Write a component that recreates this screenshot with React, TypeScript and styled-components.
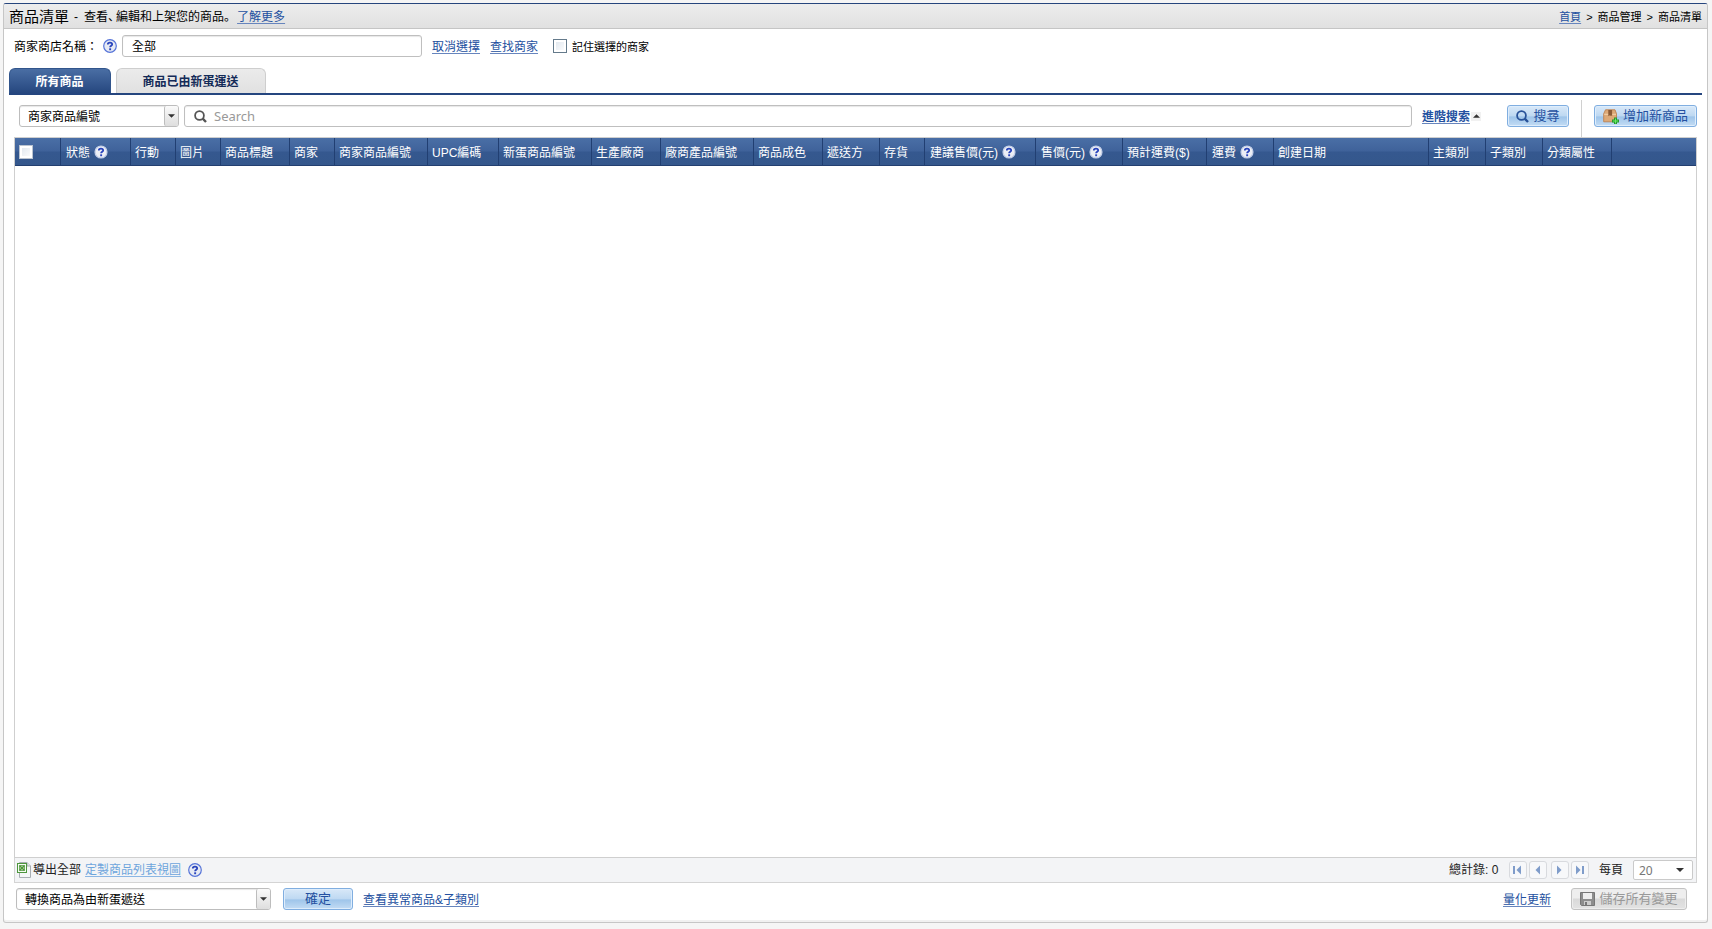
import React from "react";
import styled, { createGlobalStyle, css } from "styled-components";

const GlobalStyle = createGlobalStyle`
  * { box-sizing: border-box; }
  body {
    margin: 0;
    height: 929px;
    overflow: hidden;
    background: #f5f5f5;
    color: #000;
    font: 12px/16px "Liberation Sans", "Noto Sans CJK TC", sans-serif;
    white-space: nowrap;
  }
  svg { display: block; flex: none; }
`;

const Panel = styled.main`
  display: flex;
  flex-direction: column;
  width: 1705px;
  height: 920px;
  margin: 3px 0 0 3px;
  overflow: hidden;
  background: #fff;
  border: 1px solid #c6c6c6;
  border-top-color: #26457d;
  border-radius: 3px;
  box-shadow: inset 0 -2px #f1f1f1;
`;

const TitleBar = styled.header`
  display: flex;
  align-items: center;
  flex: none;
  height: 25px;
  padding: 0 5px;
  background: linear-gradient(#ededed, #e1e1e1);
  border-bottom: 1px solid #c5c5c5;
`;

const Title = styled.h1`
  margin: 0;
  padding-top: 1px;
  font-size: 15px;
  font-weight: 400;
`;

const Text = styled.span`
  padding-top: 2px;
`;

const Intro = styled(Text)`
  margin-left: 5px;
  font-family: "Liberation Sans", "Noto Sans CJK SC", sans-serif;
`;

const IntroText = styled.span`
  margin-left: 6px;
  font-family: "Liberation Sans", "Noto Sans CJK TC", sans-serif;
`;

const Tight = styled.span`
  margin-right: 2px;
  font-feature-settings: "halt";
`;

const Link = styled.a<{ $gap?: number; $bold?: boolean; $pale?: boolean }>`
  margin-left: ${(p) => p.$gap ?? 0}px;
  padding-top: ${(p) => (p.$pale ? 0 : 2)}px;
  color: ${(p) => (p.$pale ? "#6ea5dc" : "#2350a0")};
  font-weight: ${(p) => (p.$bold ? 700 : 400)};
  text-decoration: underline 1px ${(p) => (p.$pale ? "#8ab6e4" : "#6785bd")};
  text-decoration-skip-ink: none;
  text-underline-offset: 2px;
`;

const Breadcrumb = styled.nav`
  display: flex;
  gap: 5px;
  margin-left: auto;
  font-size: 11px;
`;

const StoreRow = styled.section`
  display: flex;
  align-items: center;
  flex: none;
  height: 39px;
  padding: 0 10px 5px;
`;

const StoreLabel = styled.label`
  width: 89px;
  padding-top: 2px;
`;

const TextBox = styled.div<{ $width?: number }>`
  display: flex;
  align-items: center;
  height: 22px;
  padding: 0 9px;
  background: #fff;
  border: 1px solid #bfbfbf;
  border-radius: 3px;
  box-shadow: inset 0 1px 1px #e7e7e7;
  ${(p) => (p.$width ? css`width: ${p.$width}px;` : css`flex: 1;`)}
`;

const Check = styled.span<{ $inHeader?: boolean }>`
  width: 14px;
  height: 14px;
  flex: none;
  background: linear-gradient(135deg, #dce4ec, #fff);
  border: 1px solid ${(p) => (p.$inHeader ? "#b9c3d0" : "#647a8b")};
  box-shadow: inset 0 0 0 2px #fff;
`;

const RememberLabel = styled.label`
  margin-left: 5px;
  padding-top: 2px;
  font-size: 11px;
`;

const Tabs = styled.nav`
  display: flex;
  flex: none;
  gap: 5px;
  height: 27px;
  margin: 0 5px;
  border-bottom: 2px solid #25467f;
`;

const Tab = styled.button<{ $active?: boolean; $width: number }>`
  width: ${(p) => p.$width}px;
  height: 25px;
  padding: 2px 1px 0 0;
  font: inherit;
  font-weight: 700;
  color: ${(p) => (p.$active ? "#fff" : "#142b58")};
  background: ${(p) => (p.$active ? "linear-gradient(#4a6ea4, #26477f)" : "linear-gradient(#ebebeb, #e1e1e1)")};
  border: 1px solid ${(p) => (p.$active ? "#31558c" : "#cecece")};
  border-bottom: 0;
  border-radius: 6px 6px 0 0;
`;

const SearchRow = styled.section`
  display: flex;
  align-items: center;
  flex: none;
  height: 42px;
  padding: 0 10px 0 15px;
`;

const SelectBox = styled.div<{ $width: number }>`
  display: flex;
  align-items: center;
  justify-content: space-between;
  width: ${(p) => p.$width}px;
  height: 22px;
  padding-left: 8px;
  background: #fff;
  border: 1px solid #bdbdbd;
  border-radius: 3px;
  box-shadow: inset 0 1px 1px #e7e7e7;
`;

const SelectArrow = styled.span`
  display: grid;
  place-items: center;
  width: 14px;
  height: 20px;
  background: linear-gradient(#fafafa, #dedede);
  border-left: 1px solid #bdbdbd;
  border-radius: 2px;
`;

const SearchBox = styled(TextBox)`
  gap: 7px;
  margin-left: 5px;
  color: #999;
  font: 13px "Noto Sans", sans-serif;
`;

const Expand = styled.span`
  display: grid;
  place-items: center;
  width: 10px;
  height: 9px;
  margin: 0 1px;
  background: #f1f1f1;
`;

const ActionButton = styled.button<{ $width: number; $disabled?: boolean }>`
  display: flex;
  align-items: center;
  justify-content: center;
  gap: 4px;
  flex: none;
  width: ${(p) => p.$width}px;
  height: 22px;
  padding: 0;
  font: 13px/18px "Liberation Sans", "Noto Sans CJK TC", sans-serif;
  border-radius: 3px;
  ${(p) =>
    p.$disabled
      ? css`
          color: #999;
          background: linear-gradient(#eee 0 45%, #d9d9d9 50%, #e3e3e3);
          border: 1px solid #c2c2c2;
          box-shadow: inset 0 0 0 1px #ededed;
        `
      : css`
          color: #2450a0;
          background: linear-gradient(#d8e8f8 0, #bfd9f2 48%, #9fc5ea 55%, #c3dcf4);
          border: 1px solid #80aee0;
          box-shadow: inset 0 0 0 1px #deedfc;
        `}
`;

const Separator = styled.i`
  align-self: flex-end;
  width: 1px;
  height: 37px;
  margin: 0 12px;
  background: #d0d0d0;
`;

const Grid = styled.section`
  display: flex;
  flex-direction: column;
  flex: none;
  width: 1683px;
  height: 721px;
  margin-left: 10px;
  border: 1px solid #cfcfcf;
`;

const GridHeader = styled.div`
  display: flex;
  height: 28px;
  flex: none;
  color: #fff;
  background: linear-gradient(#4a6fa6, #3f629a 49%, #35588f 51%, #34578c);
  border-bottom: 1px solid #233f70;
`;

const HeaderCell = styled.div<{ $width: number; $help?: boolean }>`
  display: flex;
  align-items: center;
  gap: 4px;
  flex: none;
  width: ${(p) => p.$width}px;
  padding-left: ${(p) => (p.$help ? 5 : 4)}px;
  border-right: 1px solid #213f72;
  &:last-child { border-right: 0; }
`;

const GridFooter = styled.footer`
  display: flex;
  align-items: center;
  flex: none;
  width: 1683px;
  height: 25px;
  margin-left: 10px;
  padding: 0 3px 0 2px;
  color: #222;
  background: #f3f4f6;
  border: 1px solid #d4d4d4;
  border-top: 0;
`;

const ExportLabel = styled.span`
  margin-left: 2px;
`;

const Spacer = styled.span<{ $width: number }>`
  width: ${(p) => p.$width}px;
`;

const Total = styled.span`
  width: 60px;
  margin-left: auto;
`;

const Pager = styled.div`
  display: flex;
  gap: 2px;
  width: 90px;
`;

const PageButton = styled.button<{ $after?: number }>`
  display: grid;
  place-items: center;
  width: 18px;
  height: 18px;
  padding: 0;
  margin-right: ${(p) => p.$after ?? 0}px;
  background: #f7f8fa;
  border: 1px solid #d8dade;
  border-radius: 3px;
`;

const PageSize = styled.div`
  display: flex;
  align-items: center;
  justify-content: space-between;
  width: 60px;
  height: 20px;
  margin-left: 10px;
  padding: 0 8px 0 5px;
  color: #777;
  background: #fff;
  border: 1px solid #cacaca;
  border-radius: 2px;
  font: 12px "Noto Sans", sans-serif;
`;

const BottomRow = styled.section`
  display: flex;
  align-items: center;
  flex: none;
  height: 32px;
  padding: 0 20px 0 12px;
`;

const ConfirmButton = styled(ActionButton)`
  margin-left: 12px;
`;

const BottomRight = styled.div`
  display: flex;
  align-items: center;
  gap: 20px;
  margin-left: auto;
`;

const HelpIcon = ({ light = false }: { light?: boolean }) => (
  <svg width="14" height="14" viewBox="0 0 14 14">
    <circle cx="7" cy="7" r={light ? 6 : 6.3} fill={light ? "#eceff5" : "#e6eaf4"} stroke={light ? "#c3cfe9" : "#5674d8"} strokeWidth="1.2" />
    <path d="M4.8 5.4C4.8 3 9.2 2.9 9.2 5.3 9.2 6.8 7.1 6.7 7.1 8.3" fill="none" stroke="#2944bc" strokeWidth="1.8" />
    <rect x="6.2" y="9.3" width="1.9" height="1.9" fill="#2944bc" />
  </svg>
);

const SearchIcon = ({ color }: { color: string }) => (
  <svg width="13" height="13" viewBox="0 0 13 13" fill="none" stroke={color} strokeWidth="1.8">
    <circle cx="5.5" cy="5.5" r="4.4" />
    <path d="m8.7 8.7 3.3 3.3" strokeWidth="2.4" />
  </svg>
);

const Triangle = ({ up = false, wide = false }: { up?: boolean; wide?: boolean }) => (
  <svg width={wide ? 8 : 7} height="4" viewBox="0 0 8 4">
    <path d={up ? "M0 4 4 0 8 4Z" : "M0 0H8L4 4Z"} fill="#333" />
  </svg>
);

const BoxIcon = () => (
  <svg width="16" height="15" viewBox="0 0 16 15">
    <path d="M2.5.8h9.5l1.5 4v8H.7v-8Z" fill="#dda977" stroke="#bd8352" strokeWidth=".9" />
    <path d="M1.2 4.8H13v1.3H1.2Z" fill="#efcaa0" />
    <path d="M5.3 1h3.8v6.2L8 6.3 7.2 7 6.4 6.3l-1.1.9Z" fill="#8b5a36" />
    <path d="M11 8.5h3v2h2v3h-2V15h-3v-1.5H9v-3h2Z" fill="#24992f" />
    <path d="M12 9.5h1v2h2v1h-2v2h-1v-2h-2v-1h2Z" fill="#69ed62" />
  </svg>
);

const ExcelIcon = () => (
  <svg width="14" height="16" viewBox="0 0 14 16">
    <path d="M2.5.5h7.5l3.5 3.5v11.5h-11Z" fill="#f5f7f7" stroke="#a8aeb2" />
    <path d="M10 .5V4h3.5" fill="#e1e5e7" stroke="#a8aeb2" />
    <rect x=".5" y="1.5" width="9" height="9" fill="#f5fbf2" stroke="#4d963d" />
    <rect x="2.5" y="3.5" width="5" height="5" fill="#d7edcf" stroke="#77ad69" />
    <path d="m2.7 3.7 4.6 4.6m0-4.6L2.7 8.3" stroke="#4f9739" strokeWidth="1.5" />
  </svg>
);

const SaveIcon = () => (
  <svg width="15" height="14" viewBox="0 0 15 14">
    <path d="M.5.5h14v13h-13l-1-1Z" fill="#8d8d8d" stroke="#777" />
    <path d="M3 1h9v6H3Z" fill="#eee" />
    <path d="M4 9h7v4H4Z" fill="#ccc" />
    <path d="M5 10h2v3H5Z" fill="#777" />
  </svg>
);

const PageIcon = ({ back = false, edge = false }: { back?: boolean; edge?: boolean }) => (
  <svg width="9" height="10" viewBox="0 0 9 10" fill="#7f9cca">
    <path d={back ? "M7 .5V9.5L2.5 5Z" : "M2 .5V9.5L6.5 5Z"} transform={edge ? `translate(${back ? 1 : -1} 0)` : undefined} />
    {edge && <rect x={back ? 0 : 7} y="1" width="2" height="8" />}
  </svg>
);

const columns: { text: string; width: number; help?: boolean }[] = [
  { text: "狀態", width: 70, help: true },
  { text: "行動", width: 45 },
  { text: "圖片", width: 45 },
  { text: "商品標題", width: 69 },
  { text: "商家", width: 45 },
  { text: "商家商品編號", width: 93 },
  { text: "UPC編碼", width: 71 },
  { text: "新蛋商品編號", width: 93 },
  { text: "生產廠商", width: 69 },
  { text: "廠商產品編號", width: 93 },
  { text: "商品成色", width: 69 },
  { text: "遞送方", width: 57 },
  { text: "存貨", width: 45 },
  { text: "建議售價(元)", width: 111, help: true },
  { text: "售價(元)", width: 87, help: true },
  { text: "預計運費($)", width: 84 },
  { text: "運費", width: 67, help: true },
  { text: "創建日期", width: 155 },
  { text: "主類別", width: 57 },
  { text: "子類別", width: 57 },
  { text: "分類屬性", width: 69 },
  { text: "", width: 84 },
];

export default function App() {
  return (
    <>
      <GlobalStyle />
      <Panel>
        <TitleBar>
          <Title>商品清單</Title>
          <Intro lang="zh-CN">
            -<IntroText>查看</IntroText><Tight>、</Tight>編輯和上架您的商品。
          </Intro>
          <Link $gap={1}>了解更多</Link>
          <Breadcrumb>
            <Link>首頁</Link><Text>&gt;</Text><Text>商品管理</Text><Text>&gt;</Text><Text>商品清單</Text>
          </Breadcrumb>
        </TitleBar>
        <StoreRow>
          <StoreLabel>商家商店名稱：</StoreLabel>
          <HelpIcon />
          <Spacer $width={5} />
          <TextBox $width={300}><Text>全部</Text></TextBox>
          <Link $gap={10}>取消選擇</Link>
          <Link $gap={10}>查找商家</Link>
          <Spacer $width={15} />
          <Check />
          <RememberLabel>記住選擇的商家</RememberLabel>
        </StoreRow>
        <Tabs>
          <Tab $active $width={102}>所有商品</Tab>
          <Tab $width={150}>商品已由新蛋運送</Tab>
        </Tabs>
        <SearchRow>
          <SelectBox $width={160}><Text>商家商品編號</Text><SelectArrow><Triangle /></SelectArrow></SelectBox>
          <SearchBox><SearchIcon color="#555" />Search</SearchBox>
          <Link $gap={10} $bold>進階搜索</Link>
          <Expand><Triangle up /></Expand>
          <Spacer $width={25} />
          <ActionButton $width={62}><SearchIcon color="#285299" />搜尋</ActionButton>
          <Separator />
          <ActionButton $width={103}><BoxIcon />增加新商品</ActionButton>
        </SearchRow>
        <Grid>
          <GridHeader>
            <HeaderCell $width={46}><Check $inHeader /></HeaderCell>
            {columns.map((column) => (
              <HeaderCell key={column.text} $width={column.width} $help={column.help}>
                <Text>{column.text}</Text>{column.help && <HelpIcon light />}
              </HeaderCell>
            ))}
          </GridHeader>
        </Grid>
        <GridFooter>
          <ExcelIcon />
          <ExportLabel>導出全部</ExportLabel>
          <Link $gap={4} $pale>定製商品列表視圖</Link>
          <Spacer $width={7} />
          <HelpIcon />
          <Total>總計錄: 0</Total>
          <Pager>
            <PageButton><PageIcon back edge /></PageButton>
            <PageButton $after={2}><PageIcon back /></PageButton>
            <PageButton><PageIcon /></PageButton>
            <PageButton><PageIcon edge /></PageButton>
          </Pager>
          <span>每頁</span>
          <PageSize>20<Triangle wide /></PageSize>
        </GridFooter>
        <BottomRow>
          <SelectBox $width={255}><Text>轉換商品為由新蛋遞送</Text><SelectArrow><Triangle /></SelectArrow></SelectBox>
          <ConfirmButton $width={70}>確定</ConfirmButton>
          <Link $gap={10}>查看異常商品&amp;子類別</Link>
          <BottomRight>
            <Link>量化更新</Link>
            <ActionButton $width={116} $disabled><SaveIcon />儲存所有變更</ActionButton>
          </BottomRight>
        </BottomRow>
      </Panel>
    </>
  );
}
